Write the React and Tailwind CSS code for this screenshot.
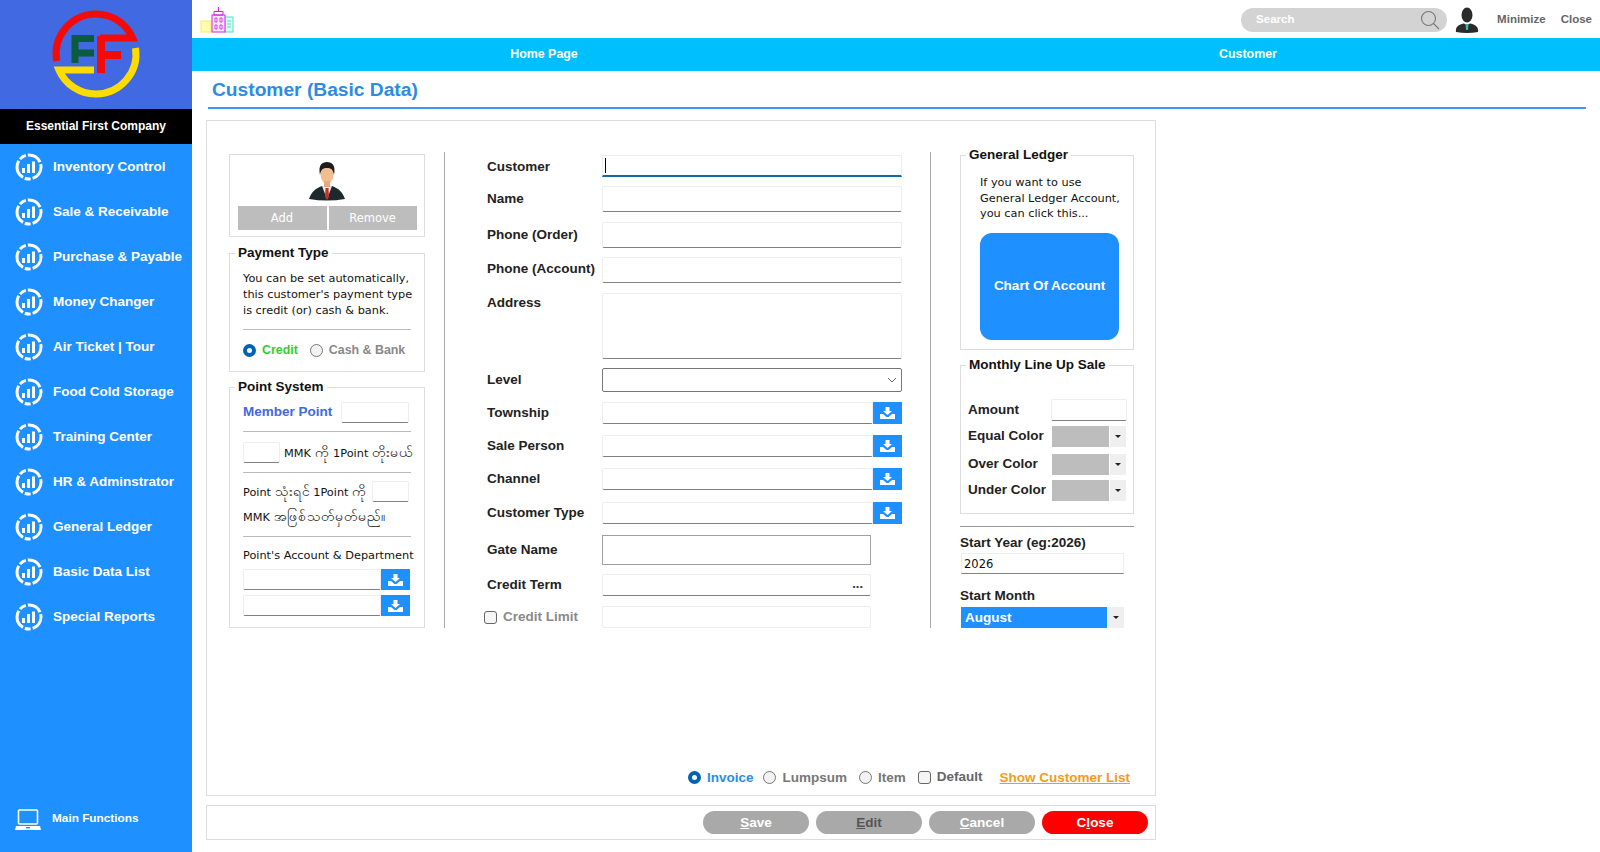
import React from 'react';

const menu = ['Inventory Control', 'Sale & Receivable', 'Purchase & Payable', 'Money Changer', 'Air Ticket | Tour', 'Food Cold Storage', 'Training Center', 'HR & Adminstrator', 'General Ledger', 'Basic Data List', 'Special Reports'];

const Logo = () => (
    <svg width="192" height="109" viewBox="0 0 192 109" fill="none">
        <path d="M56.7 61 A40 40 0 0 1 96 14 A40 40 0 0 1 132.6 38 H100" stroke="#f50a0a" strokeWidth="7" />
        <path d="M135.5 48 A40 40 0 0 1 96 94 A40 40 0 0 1 59 70 H94" stroke="#ffdc00" strokeWidth="7" />
        <path d="M75 63 V38.5 H94 M75 53 H94" stroke="#0b5c3e" strokeWidth="7" />
        <path d="M101 73 V36 M100 55 H121" stroke="#f50a0a" strokeWidth="8" />
    </svg>
);

const Gauge = () => (
    <svg width="30" height="30" viewBox="0 0 30 30" fill="none" className="shrink-0">
        <circle cx="15" cy="15" r="12" stroke="white" strokeWidth="3" strokeDasharray="15 2 6 2 19 2 7 2" />
        <path d="M9.5 21 V16 M14.5 21 V12 M19.5 21 V9.5" stroke="white" strokeWidth="3" />
    </svg>
);

const Laptop = () => (
    <svg width="26" height="22" viewBox="0 0 26 22" fill="none">
        <rect x="3.5" y="1" width="19" height="14" rx="1" stroke="white" strokeWidth="1.6" />
        <path d="M1 17 H25 L26 21 H0 Z" fill="white" />
        <rect x="11" y="18" width="4" height="1.4" fill="#1e90ff" />
    </svg>
);

const Buildings = () => (
    <svg width="34" height="27" viewBox="0 0 34 27" fill="none">
        <rect x="1" y="15" width="10" height="11" fill="#fffbb0" stroke="#f4ee60" />
        <rect x="25" y="11" width="8" height="15" fill="#d8fff4" stroke="#54e0c4" />
        <path d="M27 15 H31 M27 18 H31 M27 21 H31" stroke="#54e0c4" />
        <rect x="12" y="9" width="13" height="17" fill="#fbeaff" stroke="#d020e0" />
        <path d="M14 5.5 H23 V9 H14 Z M18.5 1 V5.5" stroke="#d020e0" />
        <path d="M15 12 H17 V16 H15 Z M20 12 H22 V16 H20 Z M15 19 H17 V23 H15 Z M20 19 H22 V23 H20 Z" stroke="#d020e0" strokeWidth="0.8" />
    </svg>
);

const DarkPerson = () => (
    <svg width="24" height="26" viewBox="0 0 24 26">
        <ellipse cx="12" cy="8" rx="5.5" ry="7.5" fill="#2b2b2b" />
        <path d="M1 25 C0 19 5 17.5 9 16.5 L12 18 L15 16.5 C19 17.5 24 19 23 25 Q12 27 1 25 Z" fill="#2b2b2b" />
        <path d="M10.5 17 H13.5 L13 23 H11 Z" fill="#3fb5a5" />
    </svg>
);

const SuitPerson = () => (
    <svg width="36" height="39" viewBox="0 0 36 39">
        <path d="M0 37 C3 29 6 27 13 24 L18 27 L23 24 C30 27 33 29 36 37 Q18 40 0 37 Z" fill="#1c2a30" />
        <path d="M13 24 L18 37 L23 24 L18 26 Z" fill="#eef0f0" />
        <path d="M16.5 26 H19.5 L20 35 L18 38 L16 35 Z" fill="#c8331e" />
        <ellipse cx="18" cy="12" rx="6.5" ry="10" fill="#f3bd92" />
        <rect x="15" y="19" width="6" height="6" fill="#e8a97c" />
        <path d="M11 13 C9 3 13 0 18 0 C23 0 27 3 25 13 C24 7 22 6 18 6 C14 6 12 7 11 13 Z" fill="#1d1d1d" />
    </svg>
);

const DownloadBtn = ({ h = 'h-[22px]' }) => (
    <div className={`w-[29px] ${h} bg-[#1e90ff] shrink-0 flex items-center justify-center`}>
        <svg width="15" height="12" viewBox="0 0 15 12" fill="white">
            <path d="M5.5 0 H9.5 V4 H12 L7.5 8 L3 4 H5.5 Z" />
            <path d="M0 7 H3 L6.5 10 H8.5 L12 7 H15 V12 H0 Z" />
        </svg>
    </div>
);

const Field = ({ className = '' }) => (
    <input className={`block border border-[#eeeeee] border-b-[#808080] rounded-[2px] bg-white outline-none ${className}`} />
);

const Radio = ({ on }) => (
    <span className={`block w-[13px] h-[13px] rounded-full shrink-0 ${on ? 'border-[4px] border-[#0063b1] bg-white' : 'border border-[#777777] bg-[#f2f2f2]'}`} />
);

const Check = () => (
    <span className="block w-[13px] h-[13px] rounded-[3px] border border-[#666666] bg-[#f5f5f5] shrink-0" />
);

const Box = ({ title, className, inner, children }) => (
    <fieldset className={`border border-[#dddddd] ${className}`}>
        <legend className="ml-[5px] px-[3px] h-[16px] leading-[16px] text-[13.5px] font-bold text-[#111111]">{title}</legend>
        <div className={inner}>{children}</div>
    </fieldset>
);

const Row = ({ label, className, labelClass = '', children, start }) => (
    <div className={`flex ${start ? 'items-start' : 'items-center'} ${className}`}>
        <span className={`w-[115px] text-[13.5px] font-bold text-[#222222] ${labelClass}`}>{label}</span>
        {children}
    </div>
);

const LookupRow = ({ label, className }) => (
    <Row label={label} className={className}>
        <Field className="w-[271px] h-[22px]" />
        <DownloadBtn />
    </Row>
);

const ColorRow = ({ label, className }) => (
    <div className={`flex items-center ${className}`}>
        <span className="w-[84px] text-[13.5px] font-bold text-[#222222]">{label}</span>
        <div className="w-[57px] h-[21px] bg-[#bdbdbd]" />
        <div className="ml-px w-[16px] h-[21px] bg-[#efefef] flex items-center justify-center">
            <span className="border-x-[3px] border-x-transparent border-t-[3px] border-t-[#222222]" />
        </div>
    </div>
);

const BottomBtn = ({ color, before, letter, rest }) => (
    <button className={`w-[106px] h-[23px] pt-[1px] rounded-full text-[13.5px] font-bold ${color}`}>
        {before}<span className="underline">{letter}</span>{rest}
    </button>
);

const My = ({ children }) => <span className="text-[14px]">{children}</span>;

export default function App() {
    return (
        <div className="flex w-[1600px] h-[852px] overflow-hidden bg-white font-['Liberation_Sans',sans-serif]">
            {/* sidebar */}
            <aside className="w-[192px] shrink-0 bg-[#1e90ff] flex flex-col text-white">
                <div className="h-[109px] bg-[#4169e1]"><Logo /></div>
                <div className="h-[35px] pb-[1px] bg-black flex items-center justify-center text-[12px] font-bold">Essential First Company</div>
                <div>
                    {menu.map(item => (
                        <div key={item} className="h-[45px] flex items-center pl-[14px] gap-[9px] text-[13.5px] font-bold">
                            <Gauge /> <span className="pt-[2px]">{item}</span>
                        </div>
                    ))}
                </div>
                <div className="mt-auto mb-[21px] pl-[15px] flex items-center gap-[11px] text-[11.8px] font-bold">
                    <Laptop /> <span className="pb-[2px]">Main Functions</span>
                </div>
            </aside>

            <main className="flex-1 min-w-0">
                {/* top bar */}
                <div className="h-[38px] pt-[1px] flex items-center pl-[8px]">
                    <Buildings />
                    <div className="ml-auto w-[206px] h-[24px] rounded-full bg-[#d3d3d3] flex items-center pl-[15px] pr-[7px] text-[11.5px] font-bold text-white">
                        Search
                        <svg className="ml-auto" width="20" height="20" viewBox="0 0 20 20" fill="none" stroke="#777777" strokeWidth="1.1">
                            <circle cx="8.5" cy="8.5" r="7" />
                            <path d="M13.5 13.5 L19 19" />
                        </svg>
                    </div>
                    <div className="ml-[8px]"><DarkPerson /></div>
                    <span className="ml-[18px] text-[11.5px] font-bold text-[#666666]">Minimize</span>
                    <span className="ml-[15px] mr-[8px] text-[11.5px] font-bold text-[#666666]">Close</span>
                </div>

                {/* nav */}
                <div className="h-[33px] bg-[#00bfff] flex text-white text-[12.4px] font-bold">
                    <div className="flex-1 flex items-center justify-center">Home Page</div>
                    <div className="flex-1 flex items-center justify-center">Customer</div>
                </div>

                {/* title */}
                <div className="ml-[16px] mr-[14px] h-[38px] pt-[3px] border-b-2 border-[#3f96f0] pl-[4px] flex items-center text-[19.2px] font-bold text-[#2b8ce6]">
                    Customer (Basic Data)
                </div>

                {/* form panel */}
                <div className="ml-[14px] mt-[11px] w-[950px] h-[676px] border border-[#dddddd] flex flex-col justify-between pt-[26px]">
                    <div className="flex items-start pl-[22px]">
                        {/* left column */}
                        <div className="w-[196px] mt-[7px] shrink-0">
                            <div className="h-[83px] border border-[#dddddd] pt-[7px] flex flex-col items-center">
                                <SuitPerson />
                                <div className="mt-[5px] flex gap-[2px] font-['DejaVu_Sans',sans-serif] text-[11.5px] text-white">
                                    <div className="w-[89px] h-[24px] pt-[1px] bg-[#bdbdbd] flex items-center justify-center">Add</div>
                                    <div className="w-[88px] h-[24px] pt-[1px] bg-[#bdbdbd] flex items-center justify-center">Remove</div>
                                </div>
                            </div>

                            <Box title="Payment Type" className="mt-[8px] h-[127px]" inner="pl-[13px]">
                                <p className="pt-[10px] font-['DejaVu_Sans',sans-serif] text-[11.3px] leading-[16px] text-[#111111] whitespace-nowrap">
                                    You can be set automatically,<br />this customer's payment type<br />is credit (or) cash &amp; bank.
                                </p>
                                <div className="mt-[10px] w-[168px] h-px bg-[#bbbbbb]" />
                                <div className="mt-[11px] flex items-center text-[12.4px] font-bold">
                                    <Radio on />
                                    <span className="ml-[6px] text-[#33cc33]">Credit</span>
                                    <span className="ml-[12px]"><Radio /></span>
                                    <span className="ml-[6px] text-[#888888]">Cash &amp; Bank</span>
                                </div>
                            </Box>

                            <Box title="Point System" className="mt-[7px] h-[249px]" inner="pl-[13px] font-['DejaVu_Sans','Noto_Sans',sans-serif]">
                                <div className="pt-[7px] w-[166px] flex items-center justify-between">
                                    <span className="font-['Liberation_Sans',sans-serif] text-[13.5px] font-bold text-[#4169e1]">Member Point</span>
                                    <Field className="w-[68px] h-[21px]" />
                                </div>
                                <div className="mt-[8px] w-[168px] h-px bg-[#bbbbbb]" />
                                <div className="mt-[10px] flex items-center text-[11.3px] text-[#111111]">
                                    <Field className="w-[37px] h-[21px]" />
                                    <span className="ml-[4px] whitespace-nowrap">MMK <My>ကို</My> 1Point <My>တိုးမယ်</My></span>
                                </div>
                                <div className="mt-[9px] w-[168px] h-px bg-[#bbbbbb]" />
                                <div className="mt-[8px] w-[166px] flex items-center justify-between text-[11.3px] text-[#111111]">
                                    <span className="whitespace-nowrap">Point <My>သုံးရင်</My> 1Point <My>ကို</My></span>
                                    <Field className="w-[37px] h-[21px]" />
                                </div>
                                <div className="mt-[6px] h-[16px] leading-[16px] text-[11.3px] text-[#111111] whitespace-nowrap">MMK <My>အဖြစ်သတ်မှတ်မည်။</My></div>
                                <div className="mt-[12px] w-[168px] h-px bg-[#bbbbbb]" />
                                <div className="mt-[10px] h-[16px] pt-[1px] leading-[16px] text-[11.3px] text-[#111111] whitespace-nowrap">Point's Account &amp; Department</div>
                                <div className="mt-[6px] flex">
                                    <Field className="w-[138px] h-[21px]" />
                                    <DownloadBtn h="h-[21px]" />
                                </div>
                                <div className="mt-[5px] flex">
                                    <Field className="w-[138px] h-[21px]" />
                                    <DownloadBtn h="h-[21px]" />
                                </div>
                            </Box>
                        </div>

                        <div className="ml-[19px] mt-[5px] w-px h-[476px] bg-[#aaaaaa] shrink-0" />

                        {/* middle column */}
                        <div className="ml-[42px] mt-[8px] w-[415px] shrink-0">
                            <Row label="Customer" className="h-[22px]" labelClass="pt-[2px]">
                                <div className="w-[300px] h-[22px] border border-[#eeeeee] border-b-2 border-b-[#0f6aa8] flex items-center pl-[2px]">
                                    <span className="w-px h-[15px] bg-black" />
                                </div>
                            </Row>
                            <Row label="Name" className="mt-[9px]"><Field className="w-[300px] h-[26px]" /></Row>
                            <Row label="Phone (Order)" className="mt-[10px]"><Field className="w-[300px] h-[26px]" /></Row>
                            <Row label="Phone (Account)" className="mt-[9px]" labelClass="pb-[2px]"><Field className="w-[300px] h-[26px]" /></Row>
                            <Row label="Address" className="mt-[10px]" start><Field className="w-[300px] h-[66px]" /></Row>
                            <Row label="Level" className="mt-[9px]">
                                <div className="w-[300px] h-[24px] border border-[#777777] rounded-[2px] flex items-center justify-end pr-[4px]">
                                    <svg width="10" height="6" viewBox="0 0 10 6" fill="none" stroke="#666666"><path d="M1 1 L5 5 L9 1" /></svg>
                                </div>
                            </Row>
                            <LookupRow label="Township" className="mt-[10px]" />
                            <LookupRow label="Sale Person" className="mt-[11px]" />
                            <LookupRow label="Channel" className="mt-[11px]" />
                            <LookupRow label="Customer Type" className="mt-[12px]" />
                            <Row label="Gate Name" className="mt-[11px]">
                                <input className="block w-[269px] h-[30px] border border-[#a0a0a0] outline-none" />
                            </Row>
                            <Row label="Credit Term" className="mt-[9px]">
                                <div className="w-[269px] h-[22px] border border-[#eeeeee] border-b-[#808080] rounded-[2px] flex items-center justify-end pr-[7px] pb-[2px] text-[13px] font-bold text-[#333333]">...</div>
                            </Row>
                            <div className="mt-[10px] flex items-center -ml-[3px]">
                                <Check />
                                <span className="ml-[6px] w-[99px] text-[13.5px] font-bold text-[#8a8a8a]">Credit Limit</span>
                                <input className="block w-[269px] h-[22px] border border-[#eeeeee] rounded-[2px] outline-none" />
                            </div>
                        </div>

                        <div className="ml-[28px] mt-[5px] w-px h-[476px] bg-[#aaaaaa] shrink-0" />

                        {/* right column */}
                        <div className="ml-[29px] w-[174px] shrink-0">
                            <Box title="General Ledger" className="w-[174px] h-[203px]">
                                <p className="pl-[19px] pt-[12px] font-['DejaVu_Sans',sans-serif] text-[11.3px] leading-[15.7px] text-[#111111] whitespace-nowrap">
                                    If you want to use<br />General Ledger Account,<br />you can click this...
                                </p>
                                <div className="ml-[19px] mt-[11px] w-[139px] h-[107px] rounded-[12px] bg-[#1e90ff] flex items-center justify-center text-[13.5px] font-bold text-white">
                                    Chart Of Account
                                </div>
                            </Box>
                            <Box title="Monthly Line Up Sale" className="mt-[7px] w-[174px] h-[157px]" inner="pl-[7px] pt-[26px]">
                                <div className="flex items-center">
                                    <span className="w-[83px] text-[13.5px] font-bold text-[#222222]">Amount</span>
                                    <Field className="w-[76px] h-[22px]" />
                                </div>
                                <ColorRow label="Equal Color" className="mt-[5px]" />
                                <ColorRow label="Over Color" className="mt-[7px]" />
                                <ColorRow label="Under Color" className="mt-[5px]" />
                            </Box>
                            <div className="mt-[12px] h-px bg-[#999999]" />
                            <div className="mt-[8px] h-[16px] leading-[16px] text-[13.5px] font-bold text-[#222222]">Start Year (eg:2026)</div>
                            <input readOnly value="2026" className="block mt-[2px] ml-px w-[163px] h-[21px] border border-[#eeeeee] border-b-[#808080] pl-[2px] outline-none font-['DejaVu_Sans',sans-serif] text-[11.5px] text-[#111111]" />
                            <div className="mt-[14px] h-[16px] leading-[16px] text-[13.5px] font-bold text-[#222222]">Start Month</div>
                            <div className="mt-[3px] ml-px flex w-[163px] h-[21px]">
                                <div className="w-[146px] bg-[#1e90ff] pl-[4px] text-[13.5px] leading-[21px] font-bold text-white">August</div>
                                <div className="w-[17px] bg-[#efefef] flex items-center justify-center">
                                    <span className="border-x-[3px] border-x-transparent border-t-[3px] border-t-[#222222]" />
                                </div>
                            </div>
                        </div>
                    </div>

                    {/* options */}
                    <div className="flex items-center pr-[25px] pb-[7px] justify-end text-[13.5px] font-bold text-[#777777]">
                        <Radio on />
                        <span className="ml-[6px] text-[#2b8ce6]">Invoice</span>
                        <span className="ml-[10px]"><Radio /></span>
                        <span className="ml-[6px]">Lumpsum</span>
                        <span className="ml-[12px]"><Radio /></span>
                        <span className="ml-[6px]">Item</span>
                        <span className="ml-[12px] -mt-[1px]"><Check /></span>
                        <span className="ml-[6px] -mt-[1px] text-[#666666]">Default</span>
                        <span className="ml-[17px] text-[#f29b1d] underline">Show Customer List</span>
                    </div>
                </div>

                {/* buttons */}
                <div className="ml-[14px] mt-[9px] w-[950px] h-[35px] border border-[#dddddd] flex items-center justify-end gap-[7px] pr-[7px]">
                    <BottomBtn color="bg-[#a9a9a9] text-white" letter="S" rest="ave" />
                    <BottomBtn color="bg-[#a9a9a9] text-[#555555]" letter="E" rest="dit" />
                    <BottomBtn color="bg-[#a9a9a9] text-white" letter="C" rest="ancel" />
                    <BottomBtn color="bg-[#ff0000] text-white" before="C" letter="l" rest="ose" />
                </div>
            </main>
        </div>
    );
}
